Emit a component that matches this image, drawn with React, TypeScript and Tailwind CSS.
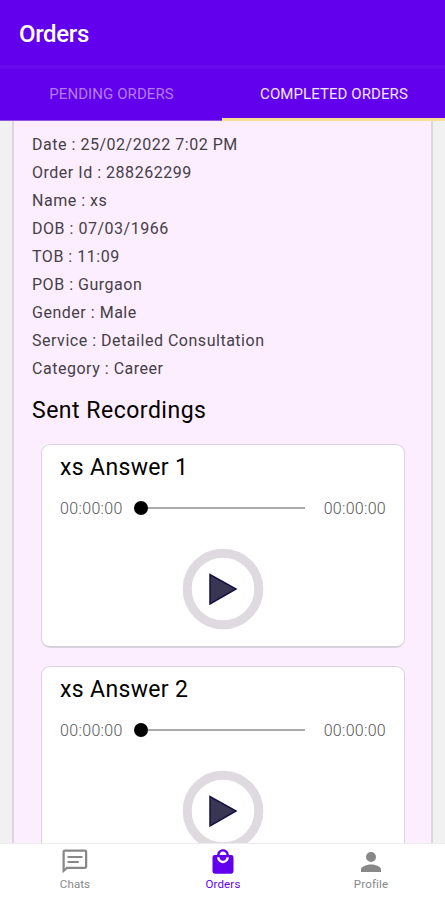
import React from "react";

const details = [
  ["Date", "25/02/2022 7:02 PM"],
  ["Order Id", "288262299"],
  ["Name", "xs"],
  ["DOB", "07/03/1966"],
  ["TOB", "11:09"],
  ["POB", "Gurgaon"],
  ["Gender", "Male"],
  ["Service", "Detailed Consultation"],
  ["Category", "Career"],
];

function Recording({ title }: { title: string }) {
  return (
    <article className="h-[204px] shrink-0 rounded-[9px] border border-b-2 border-[#d9d2dc] bg-white px-[18px] pt-[9px]">
      <h3 className="text-[23px] leading-[28px] tracking-[0.35px] text-black">{title}</h3>
      <div className="mt-[15px] flex h-[22px] items-center text-[16px] font-light text-[#555]">
        <span className="w-[74px] pt-[2px] tracking-[0.35px]">00:00:00</span>
        <span className="size-[14px] rounded-full bg-black" />
        <span className="h-[2px] w-[157px] bg-[#aaa]" />
        <span className="ml-[19px] pt-[2px] tracking-[0.3px]">00:00:00</span>
      </div>
      <div className="mt-[29px] flex justify-center">
        <svg width="82" height="82" viewBox="0 0 82 82">
          <circle cx="41" cy="41" r="35.8" fill="none" stroke="#dedae0" strokeWidth="9" />
          <path d="M28 26.5V56L54 41Z" fill="#383652" stroke="#151044" strokeWidth="1.5" />
        </svg>
      </div>
    </article>
  );
}

export default function App() {
  return (
    <div className="flex h-[900px] w-[445px] flex-col overflow-hidden bg-[#f1f1f2] font-[Roboto,sans-serif]">
      <header className="h-[65px] shrink-0 bg-[#6200ee] pl-[19px] pt-[18px]">
        <h1 className="text-[24px] font-medium leading-[32px] tracking-[-0.35px] text-white">Orders</h1>
      </header>
      <nav className="flex h-[56px] shrink-0 border-t-[4px] border-[#6809ee] bg-[#6200ee] text-[15px] tracking-[0.08px]">
        <div className="flex w-[222px] items-center justify-center border-b border-[#8d55dc] pl-px text-[#b47bf5]">
          <span>PENDING ORDERS</span>
        </div>
        <div className="flex flex-1 items-center justify-center border-b-[3px] border-[#f8df94] pt-[2px] pl-px text-[#f0e5ff]">
          <span>COMPLETED ORDERS</span>
        </div>
      </nav>
      <main className="min-h-0 flex-1 overflow-hidden px-[12px]">
        <section className="flex h-[900px] flex-col border-x-2 border-[#ddd5df] bg-[#fceefe] pl-[27px] pr-[26px] pt-[10px]">
          <div className="-ml-[9px] text-[16px] leading-[28.05px] tracking-[0.52px] text-[#454047]">
            {details.map(([label, value]) => (
              <p key={label}>{label} : {value}</p>
            ))}
          </div>
          <h2 className="-ml-[9px] mt-[13.45px] text-[23px] leading-[28px] tracking-[0.5px] text-black">Sent Recordings</h2>
          <div className="mt-[19px] flex flex-col gap-[18px]">
            <Recording title="xs Answer 1" />
            <Recording title="xs Answer 2" />
          </div>
        </section>
      </main>
      <footer className="grid h-[57px] shrink-0 grid-cols-3 border-t border-[#eeecef] bg-white pl-px text-[11.5px] leading-[14px] text-[#888]">
        <div className="flex flex-col items-center pt-[3px]">
          <svg width="30" height="30" viewBox="0 0 24 24" fill="currentColor">
            <path d="M4 3.8h16v12H5.2L3.8 17.2V3.8M3.8 2A1.8 1.8 0 0 0 2 3.8V21l3.8-3.5H20a1.8 1.8 0 0 0 1.8-1.7v-12A1.8 1.8 0 0 0 20 2H3.8zM6 11.2h9v1.6H6v-1.6zm0-4h12v1.6H6V7.2z" />
          </svg>
          <span className="tracking-[0.1px]">Chats</span>
        </div>
        <div className="flex flex-col items-center pt-[4px] text-[#6200ee]">
          <svg className="mb-px" width="28" height="28" viewBox="0 0 24 24" fill="currentColor">
            <path d="M19 6h-2c0-2.76-2.24-5-5-5S7 3.24 7 6H5a2 2 0 0 0-2 2v12a2 2 0 0 0 2 2h14a2 2 0 0 0 2-2V8a2 2 0 0 0-2-2zm-7-3c1.66 0 3 1.34 3 3H9c0-1.66 1.34-3 3-3zm0 10c-2.76 0-5-2.24-5-5h2c0 1.66 1.34 3 3 3s3-1.34 3-3h2c0 2.76-2.24 5-5 5z" />
          </svg>
          <span className="tracking-[0.15px]">Orders</span>
        </div>
        <div className="flex flex-col items-center pt-[3px]">
          <svg width="30" height="30" viewBox="0 0 24 24" fill="currentColor">
            <path d="M12 12a4 4 0 1 0 0-8 4 4 0 0 0 0 8zm0 2c-2.67 0-8 1.34-8 4v2h16v-2c0-2.66-5.33-4-8-4z" />
          </svg>
          <span className="tracking-[0.15px]">Profile</span>
        </div>
      </footer>
    </div>
  );
}
